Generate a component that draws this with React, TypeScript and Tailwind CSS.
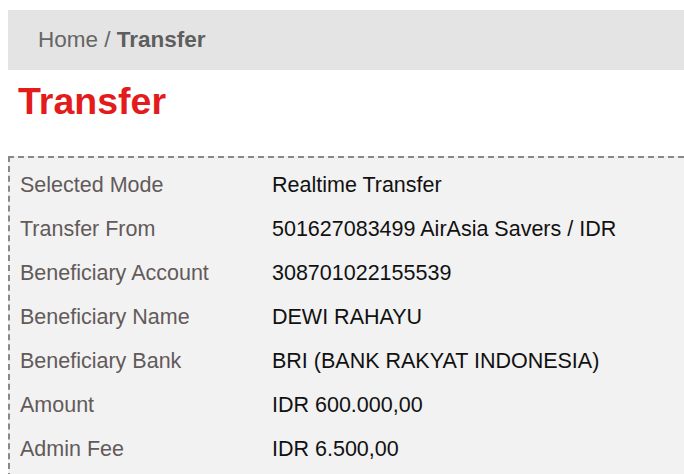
const ROWS: [string, string][] = [
  ['Selected Mode', 'Realtime Transfer'],
  ['Transfer From', '501627083499 AirAsia Savers / IDR'],
  ['Beneficiary Account', '308701022155539'],
  ['Beneficiary Name', 'DEWI RAHAYU'],
  ['Beneficiary Bank', 'BRI (BANK RAKYAT INDONESIA)'],
  ['Amount', 'IDR 600.000,00'],
  ['Admin Fee', 'IDR 6.500,00'],
]

export default function App() {
  return (
    <div
      className="w-[684px] h-[474px] overflow-hidden bg-white pt-[10px] pl-2"
      style={{ fontFamily: '"Liberation Sans", Arial, sans-serif' }}
    >
      <div className="h-[60px] bg-[#e4e4e4] flex items-center pl-[30px] text-[22.5px] text-[#666]">
        <span>Home /&nbsp;</span>
        <span className="font-bold text-[#5e5e5e]">Transfer</span>
      </div>

      <h1 className="mt-[11px] pl-[10px] h-[40px] leading-[40px] text-[37.5px] font-bold text-[#e31b1b]">
        Transfer
      </h1>

      <div className="mt-[35px] border-t-2 border-l-2 border-dashed border-[#888] bg-[#f2f2f2] pl-[10px] pt-[5px] pb-2">
        {ROWS.map(([label, value]) => (
          <div key={label} className="flex h-[44px] items-center text-[21.5px]">
            <div className="w-[252px] text-[#625a5a]">{label}</div>
            <div className="text-[#111]">{value}</div>
          </div>
        ))}
      </div>
    </div>
  )
}
